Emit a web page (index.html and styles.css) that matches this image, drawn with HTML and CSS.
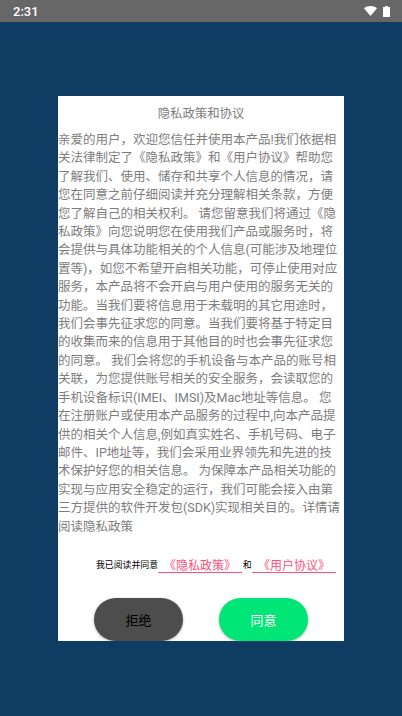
FILE: index.html
```html
<!DOCTYPE html>
<html lang="zh-CN">
<head>
    <meta charset="UTF-8">
    <meta name="viewport" content="width=device-width, initial-scale=1.0">
    <title>隐私政策和协议</title>
    <link rel="stylesheet" href="styles.css">
</head>
<body>
    <div class="status-bar">
        <span class="time">2:31</span>
        <div class="status-icons">
            <svg class="wifi" width="13" height="10" viewBox="0 0 13 10"><path d="M0 2.2C1.8.8 4 0 6.5 0S11.200.8 13 2.200L6.500 10z" fill="#fff"/></svg>
            <svg class="battery" width="7" height="11" viewBox="0 0 7 11"><path d="M2 0h3v1h2v10H0V1h2z" fill="#fff"/></svg>
        </div>
    </div>
    <div class="screen">
        <div class="dialog">
            <div class="title">隐私政策和协议</div>
            <div class="content">
                亲爱的用户，欢迎您信任并使用本产品!我们依据相<br>
                关法律制定了《隐私政策》和《用户协议》帮助您<br>
                了解我们、使用、储存和共享个人信息的情况，请<br>
                您在同意之前仔细阅读并充分理解相关条款，方便<br>
                您了解自己的相关权利。 请您留意我们将通过《隐<br>
                私政策》向您说明您在使用我们产品或服务时，将<br>
                会提供与具体功能相关的个人信息(可能涉及地理位<br>
                置等)，如您不希望开启相关功能，可停止使用对应<br>
                服务，本产品将不会开启与用户使用的服务无关的<br>
                功能。当我们要将信息用于未载明的其它用途时，<br>
                我们会事先征求您的同意。当我们要将基于特定目<br>
                的收集而来的信息用于其他目的时也会事先征求您<br>
                的同意。 我们会将您的手机设备与本产品的账号相<br>
                关联，为您提供账号相关的安全服务，会读取您的<br>
                手机设备标识(IMEI、IMSI)及Mac地址等信息。 您<br>
                在注册账户或使用本产品服务的过程中,向本产品提<br>
                供的相关个人信息,例如真实姓名、手机号码、电子<br>
                邮件、IP地址等，我们会采用业界领先和先进的技<br>
                术保护好您的相关信息。 为保障本产品相关功能的<br>
                实现与应用安全稳定的运行，我们可能会接入由第<br>
                三方提供的软件开发包(SDK)实现相关目的。详情请<br>
                阅读隐私政策
            </div>
            <div class="agree">
                <span class="agree-text">我已阅读并同意</span>
                <span class="link">《隐私政策》</span>
                <span class="agree-text and">和</span>
                <span class="link">《用户协议》</span>
            </div>
            <div class="buttons">
                <button type="button" class="btn btn-refuse">拒绝</button>
                <button type="button" class="btn btn-accept">同意</button>
            </div>
        </div>
    </div>
</body>
</html>
```

FILE: styles.css
```css
* {
    box-sizing: border-box;
    margin: 0;
    padding: 0;
}
html, body {
    width: 402px;
    height: 716px;
    overflow: hidden;
}
body {
    display: flex;
    flex-direction: column;
    background-color: #0e3c62;
    font-family: Roboto, "Noto Sans CJK SC", sans-serif;
}
.status-bar {
    height: 22px;
    background-color: #676767;
    color: white;
    display: flex;
    align-items: center;
    justify-content: space-between;
    padding: 0 12px 0 13px;
}
.time {
    font-size: 13px;
    font-weight: 500;
}
.status-icons {
    display: flex;
    align-items: center;
    gap: 6px;
}
.screen {
    flex: 1;
    padding: 74px 58px 75px;
}
.dialog {
    background-color: white;
    height: 545px;
    overflow: hidden;
}
.title {
    height: 35px;
    line-height: 36px;
    text-align: center;
    font-size: 12.4px;
    color: #7d7d7d;
}
.content {
    height: 423px;
    font-size: 12.5px;
    line-height: 18.4px;
    color: #7d7d7d;
    white-space: nowrap;
}
.agree {
    display: flex;
    align-items: flex-end;
    height: 19px;
    padding-left: 38px;
}
.agree-text {
    font-size: 8.9px;
    line-height: 15px;
    color: black;
}
.and {
    width: 10px;
    text-align: center;
}
.link {
    width: 84px;
    font-size: 12px;
    line-height: 12px;
    color: #ff4f7b;
    border-bottom: 1px solid #ff4f7b;
    text-align: center;
}
.buttons {
    display: flex;
    justify-content: space-between;
    padding: 25px 36px 0;
}
.btn {
    width: 89px;
    height: 43px;
    border: none;
    border-radius: 22px;
    font-family: inherit;
    font-size: 13px;
    box-shadow: 0 1px 3px rgba(0, 0, 0, 0.3);
}
.btn-refuse {
    background-color: #4d4d4d;
    color: black;
}
.btn-accept {
    background-color: #00e676;
    color: white;
}
```
